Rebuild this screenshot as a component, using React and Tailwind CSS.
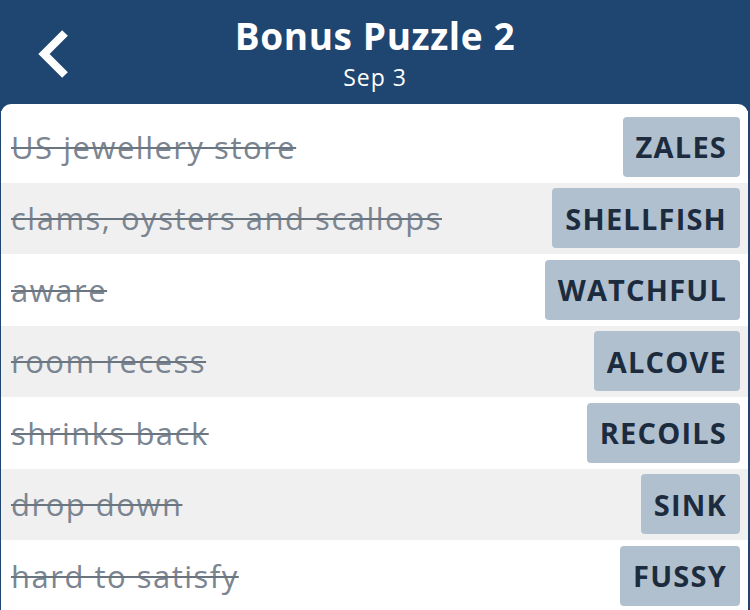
import React from "react";

const rows = [
  ["US jewellery store", "ZALES"],
  ["clams, oysters and scallops", "SHELLFISH"],
  ["aware", "WATCHFUL"],
  ["room recess", "ALCOVE"],
  ["shrinks back", "RECOILS"],
  ["drop down", "SINK"],
  ["hard to satisfy", "FUSSY"],
];

export default function App() {
  return (
    <div className="w-[750px] h-[610px] overflow-hidden bg-[#1f4571]" style={{ fontFamily: "'Open Sans', 'Noto Sans', sans-serif" }}>
      <div className="relative h-[104px] flex flex-col items-center">
        <svg className="absolute left-[36px] top-[28px]" width="36" height="52" viewBox="0 0 36 52">
          <path d="M29 5 L8 26 L29 47" fill="none" stroke="white" strokeWidth="8" strokeLinecap="butt" strokeLinejoin="miter" />
        </svg>
        <div className="mt-[12px] text-white font-bold text-[37px] tracking-[0.6px] leading-[48px]">Bonus Puzzle 2</div>
        <div className="text-white text-[23px] tracking-[1px] leading-[28px] mt-[3px]">Sep 3</div>
      </div>
      <div className="ml-[1px] mr-[2px] bg-white rounded-t-[10px] pt-[7px] h-[506px]">
        {rows.map(([clue, ans], i) => (
          <div key={i} className={`h-[71.5px] flex items-center justify-between pl-[10px] pr-[8px] ${i % 2 === 1 ? "bg-[#f0f0f0]" : "bg-white"}`}>
            <span className="text-[31px] tracking-[1.5px] text-[#7b8591] line-through decoration-[#6b7580] decoration-[2px]">{clue}</span>
            <span className="h-[60px] flex items-center px-[13px] rounded-[4px] bg-[#b0c0cf] text-[#1c2b3d] font-bold text-[29px] tracking-[1.2px]">{ans}</span>
          </div>
        ))}
      </div>
    </div>
  );
}
